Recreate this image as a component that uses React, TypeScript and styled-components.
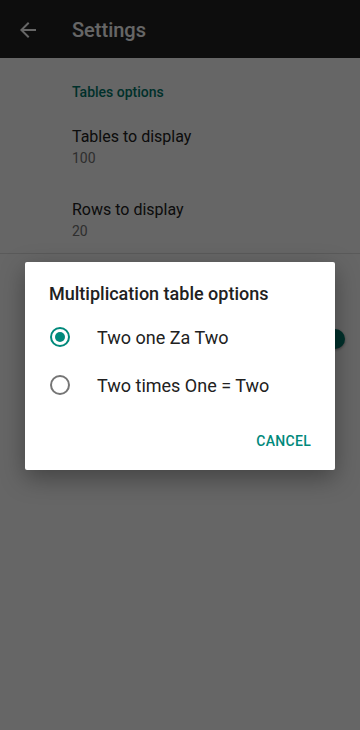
import { createGlobalStyle } from "styled-components";
import styled from "styled-components";

const GlobalStyle = createGlobalStyle`
  html, body {
    margin: 0;
    padding: 0;
    background: #ffffff;
    font-family: Roboto, "Noto Sans", sans-serif;
  }
  * { box-sizing: border-box; }
`;

const App = () => {
  return (
    <>
      <GlobalStyle />
      <Screen>
        <Toolbar>
          <BackButton>
            <svg width="24" height="24" viewBox="0 0 24 24">
              <path
                d="M20 11H7.83l5.59-5.59L12 4l-8 8 8 8 1.41-1.41L7.83 13H20v-2z"
                fill="#ffffff"
              />
            </svg>
          </BackButton>
          <Title>Settings</Title>
        </Toolbar>
        <Category>Tables options</Category>
        <Pref>
          <PrefTitle>Tables to display</PrefTitle>
          <PrefSummary>100</PrefSummary>
        </Pref>
        <Pref>
          <PrefTitle>Rows to display</PrefTitle>
          <PrefSummary>20</PrefSummary>
        </Pref>
        <Divider />
        {/* the switch preference, mostly hidden behind the dialog */}
        <SwitchRow>
          <Switch>
            <Track />
            <Thumb />
          </Switch>
        </SwitchRow>

        <Scrim>
          <Dialog>
            <DialogTitle>Multiplication table options</DialogTitle>
            <Options>
              <Option>
                <Radio checked />
                <OptionText>Two one Za Two</OptionText>
              </Option>
              <Option>
                <Radio />
                <OptionText>Two times One = Two</OptionText>
              </Option>
            </Options>
            <Actions>
              <TextButton>CANCEL</TextButton>
            </Actions>
          </Dialog>
        </Scrim>
      </Screen>
    </>
  );
};

export default App;

const Screen = styled.div`
  position: relative;
  width: 360px;
  height: 730px;
  overflow: hidden;
  background: #ffffff;
`;

const Toolbar = styled.div`
  display: flex;
  align-items: center;
  height: 58px;
  background: #212121;
  padding-left: 16px;
`;

const BackButton = styled.div`
  display: flex;
  align-items: center;
  width: 56px;
  padding-top: 2px;
`;

const Title = styled.div`
  color: #ffffff;
  font-size: 20px;
  font-weight: 500;
  padding-top: 2px;
`;

const Category = styled.div`
  color: #00796b;
  font-size: 14px;
  font-weight: 500;
  padding: 26px 0 0 72px;
  height: 68px;
`;

const Pref = styled.div`
  display: flex;
  flex-direction: column;
  padding-left: 72px;
  height: 73px;
`;

const PrefTitle = styled.div`
  color: #212121;
  font-size: 16px;
  line-height: 22px;
`;

const PrefSummary = styled.div`
  color: #757575;
  font-size: 14px;
  line-height: 20px;
`;

const Divider = styled.div`
  height: 1px;
  background: #e0e0e0;
  margin-top: -19px;
`;

const SwitchRow = styled.div`
  display: flex;
  justify-content: flex-end;
  padding: 75px 17px 0 0;
`;

const Switch = styled.div`
  position: relative;
  width: 36px;
  height: 20px;
`;

const Track = styled.div`
  position: absolute;
  left: 2px;
  top: 3px;
  width: 32px;
  height: 14px;
  border-radius: 7px;
  background: #80cbc4;
`;

const Thumb = styled.div`
  position: absolute;
  right: -2px;
  top: 0;
  width: 20px;
  height: 20px;
  border-radius: 50%;
  background: #00796b;
  box-shadow: 0 1px 3px rgba(0, 0, 0, 0.4);
`;

const Scrim = styled.div`
  position: absolute;
  inset: 0;
  background: rgba(0, 0, 0, 0.6);
  display: flex;
  justify-content: center;
  padding-top: 262px;
`;

const Dialog = styled.div`
  width: 310px;
  height: 208px;
  background: #ffffff;
  border-radius: 2px;
  box-shadow: 0 8px 24px rgba(0, 0, 0, 0.35);
  display: flex;
  flex-direction: column;
`;

const DialogTitle = styled.div`
  color: #212121;
  font-size: 18px;
  font-weight: 500;
  padding: 21px 24px 0;
  line-height: 22px;
`;

const Options = styled.div`
  display: flex;
  flex-direction: column;
  padding-top: 8px;
`;

const Option = styled.div`
  display: flex;
  align-items: center;
  height: 48px;
  padding-left: 25px;
`;

const Radio = styled.div<{ checked?: boolean }>`
  position: relative;
  width: 20px;
  height: 20px;
  border-radius: 50%;
  border: 2px solid ${(p) => (p.checked ? "#00897b" : "#757575")};
  margin-right: 27px;
  &::after {
    content: "";
    display: ${(p) => (p.checked ? "block" : "none")};
    position: absolute;
    left: 3px;
    top: 3px;
    width: 10px;
    height: 10px;
    border-radius: 50%;
    background: #00897b;
  }
`;

const OptionText = styled.div`
  color: #212121;
  font-size: 18px;
`;

const Actions = styled.div`
  display: flex;
  justify-content: flex-end;
  padding: 24px 24px 0 0;
`;

const TextButton = styled.div`
  color: #00897b;
  font-size: 14px;
  font-weight: 500;
  letter-spacing: 0.3px;
`;
